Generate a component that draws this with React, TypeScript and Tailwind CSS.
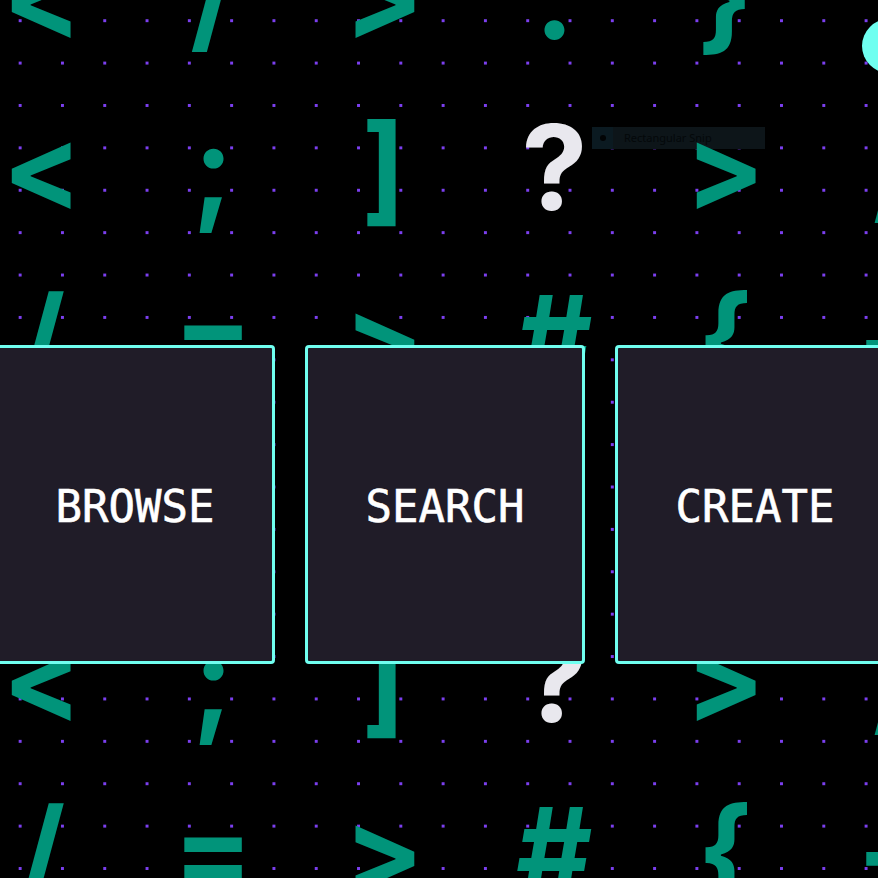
import React from 'react';

const rows: string[][] = [
  ['<', '/', '>', ':', '}', ''],
  ['<', ';', ']', '?', '>', '/'],
  ['/', '=', '>', '#', '{', '+'],
  ['<', '/', '>', ':', '}', ''],
  ['<', ';', ']', '?', '>', '/'],
  ['/', '=', '>', '#', '{', '+'],
];

const actions = ['BROWSE', 'SEARCH', 'CREATE'];

const App = () => {
  return (
    <div className="relative w-full h-[878px] overflow-hidden bg-black">
      {/* Dot grid */}
      <div className="absolute inset-0 bg-[radial-gradient(circle,#7c3ff0_1.4px,transparent_1.5px)] bg-[size:42.3px_42.4px] bg-[position:-1px_-0.5px]" />

      {/* Snipping tool leftover */}
      <div className="absolute left-[592px] top-[127px] w-[173px] h-[22px] flex items-center bg-[#0d1519]">
        <div className="w-[21px] h-full flex items-center justify-center bg-[#0b1a21]">
          <div className="w-[6px] h-[6px] rounded-full bg-[#020405]" />
        </div>
        <span className="ml-[11px] text-[11px] text-[#04080a]" style={{ fontFamily: '"Noto Sans", sans-serif' }}>
          Rectangular Snip
        </span>
      </div>

      {/* Symbol pattern */}
      <div
        className="absolute left-[-43px] top-[-89px] grid grid-cols-[repeat(6,170.7px)] auto-rows-[170.7px] font-bold text-[118px] leading-none text-[#01947a]"
        style={{ fontFamily: 'Inter, sans-serif' }}
      >
        {rows.flatMap((row, r) =>
          row.map((ch, c) => (
            <div key={`${r}-${c}`} className={`flex items-center justify-center ${ch === '?' ? 'text-[#e9e8ee]' : ''}`}>
              {ch}
            </div>
          ))
        )}
      </div>

      {/* Floating dot */}
      <div className="absolute left-[862px] top-[19px] w-[54px] h-[54px] rounded-full bg-[#6ffff0]" />

      {/* Action cards */}
      <div className="relative pt-[345px]">
        <div className="w-[900px] ml-[-5px] flex gap-[30px]">
          {actions.map((label) => (
            <div
              key={label}
              className="w-[280px] h-[319px] shrink-0 flex items-center justify-center rounded-[4px] border-[3px] border-[#70fff0] bg-[#201c28]"
            >
              <span
                className="pt-[4px] text-[44px] text-white [-webkit-text-stroke:0.6px_white]"
                style={{ fontFamily: '"DejaVu Sans Mono", monospace' }}
              >
                {label}
              </span>
            </div>
          ))}
        </div>
      </div>
    </div>
  );
};

export default App;
